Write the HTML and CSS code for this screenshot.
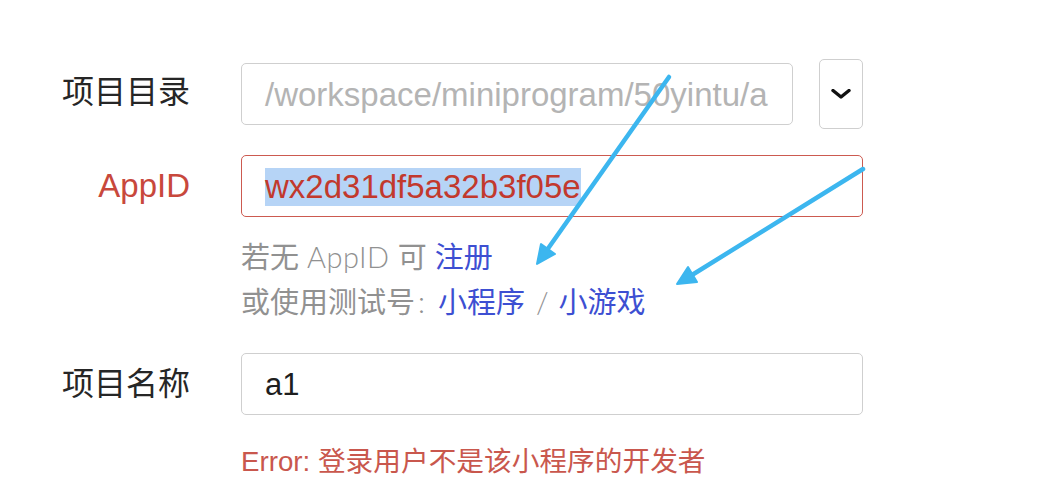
FILE: index.html
```html
<!DOCTYPE html>
<html lang="zh-CN">
<head>
<meta charset="utf-8">
<title>项目设置</title>
<link rel="stylesheet" href="styles.css">
</head>
<body>
<div class="page">
  <div class="form">
    <div class="row row-dir">
      <div class="label">项目目录</div>
      <div class="field field-dir">
        <div class="input input-muted"><span class="value">/workspace/miniprogram/50yintu/a</span></div>
        <div class="dropdown">
          <svg width="20" height="10" viewBox="0 0 20 10"><path d="M2 1.5 L10 8 L18 1.5" fill="none" stroke="#111" stroke-width="3.4" stroke-linecap="round" stroke-linejoin="round"/></svg>
        </div>
      </div>
    </div>

    <div class="row row-appid">
      <div class="label label-error">AppID</div>
      <div class="field">
        <div class="input input-error"><span class="value selected">wx2d31df5a32b3f05e</span></div>
      </div>
    </div>

    <div class="row row-help">
      <div></div>
      <div class="help">
        <div class="help-line">若无 <span class="thin">AppID</span> 可 <span class="link">注册</span></div>
        <div class="help-line">或使用测试号<span class="colon">:</span><span class="link">小程序</span><span class="slash">/</span><span class="link">小游戏</span></div>
      </div>
    </div>

    <div class="row row-name">
      <div class="label">项目名称</div>
      <div class="field">
        <div class="input"><span class="value dark">a1</span></div>
      </div>
    </div>

    <div class="row row-error">
      <div></div>
      <div class="error-msg">Error: 登录用户不是该小程序的开发者</div>
    </div>
  </div>

  <svg class="arrows" width="1038" height="484" viewBox="0 0 1038 484">
    <g stroke="#3cb6ef" stroke-width="4.5" stroke-linecap="round" fill="#3cb6ef">
      <line x1="669" y1="77" x2="547" y2="250"/>
      <polygon points="537,264 555,254 541,244" stroke-width="2" stroke-linejoin="round"/>
      <line x1="863" y1="169" x2="692" y2="275"/>
      <polygon points="677,284 697,282 688,267" stroke-width="2" stroke-linejoin="round"/>
    </g>
  </svg>
</div>
</body>
</html>
```

FILE: styles.css
```css
* {
  box-sizing: border-box;
}

html, body {
  margin: 0;
  padding: 0;
  background: #ffffff;
}

body {
  font-family: "Liberation Sans", "Noto Sans CJK SC", sans-serif;
  color: #222222;
}

.page {
  position: relative;
  width: 1038px;
  height: 484px;
  overflow: hidden;
}

.form {
  padding-top: 59px;
}

.row {
  display: grid;
  grid-template-columns: 190px 622px;
  column-gap: 51px;
  align-items: center;
}

.label {
  text-align: right;
  font-size: 32px;
  line-height: 40px;
  color: #262626;
}

.row-dir .label {
  margin-top: -4px;
}

.label-error {
  color: #c8483c;
  font-size: 33px;
}

.field {
  display: flex;
  align-items: center;
}

.field-dir {
  gap: 26px;
}

.input {
  flex: 1;
  height: 62px;
  border: 1.5px solid #cfcfcf;
  border-radius: 5px;
  padding: 2px 24px 0 23px;
  display: flex;
  align-items: center;
  overflow: hidden;
  white-space: nowrap;
  font-size: 33px;
}

.input-muted .value {
  color: #b4b4b4;
}

.input-error {
  border-color: #cc5a50;
}

.value {
  line-height: 38px;
}

.value.dark {
  color: #1e1e1e;
  font-size: 31px;
}

.selected {
  color: #c2392d;
  background: #b6d4f6;
}

.dropdown {
  width: 44px;
  height: 70px;
  border: 1.5px solid #cfcfcf;
  border-radius: 5px;
  display: flex;
  align-items: center;
  justify-content: center;
}

.row-appid {
  margin-top: 26px;
}

.row-help {
  margin-top: 18px;
}

.help {
  font-size: 29px;
  line-height: 44px;
  color: #919191;
}

.thin {
  font-family: "Lato", "Liberation Sans", sans-serif;
  font-weight: 300;
  letter-spacing: 0.5px;
}

.colon {
  font-family: "Lato", "Liberation Sans", sans-serif;
  font-weight: 300;
  margin-left: 3px;
  margin-right: 13px;
}

.slash {
  font-family: "Lato", "Liberation Sans", sans-serif;
  font-weight: 300;
  margin: 0 10px 0 11px;
}

.link {
  color: #3d4fd2;
}

.row-name {
  margin-top: 28px;
}

.row-error {
  margin-top: 25px;
}

.error-msg {
  font-size: 27.7px;
  line-height: 44px;
  color: #c9574d;
}

.arrows {
  position: absolute;
  left: 0;
  top: 0;
  pointer-events: none;
}
```
